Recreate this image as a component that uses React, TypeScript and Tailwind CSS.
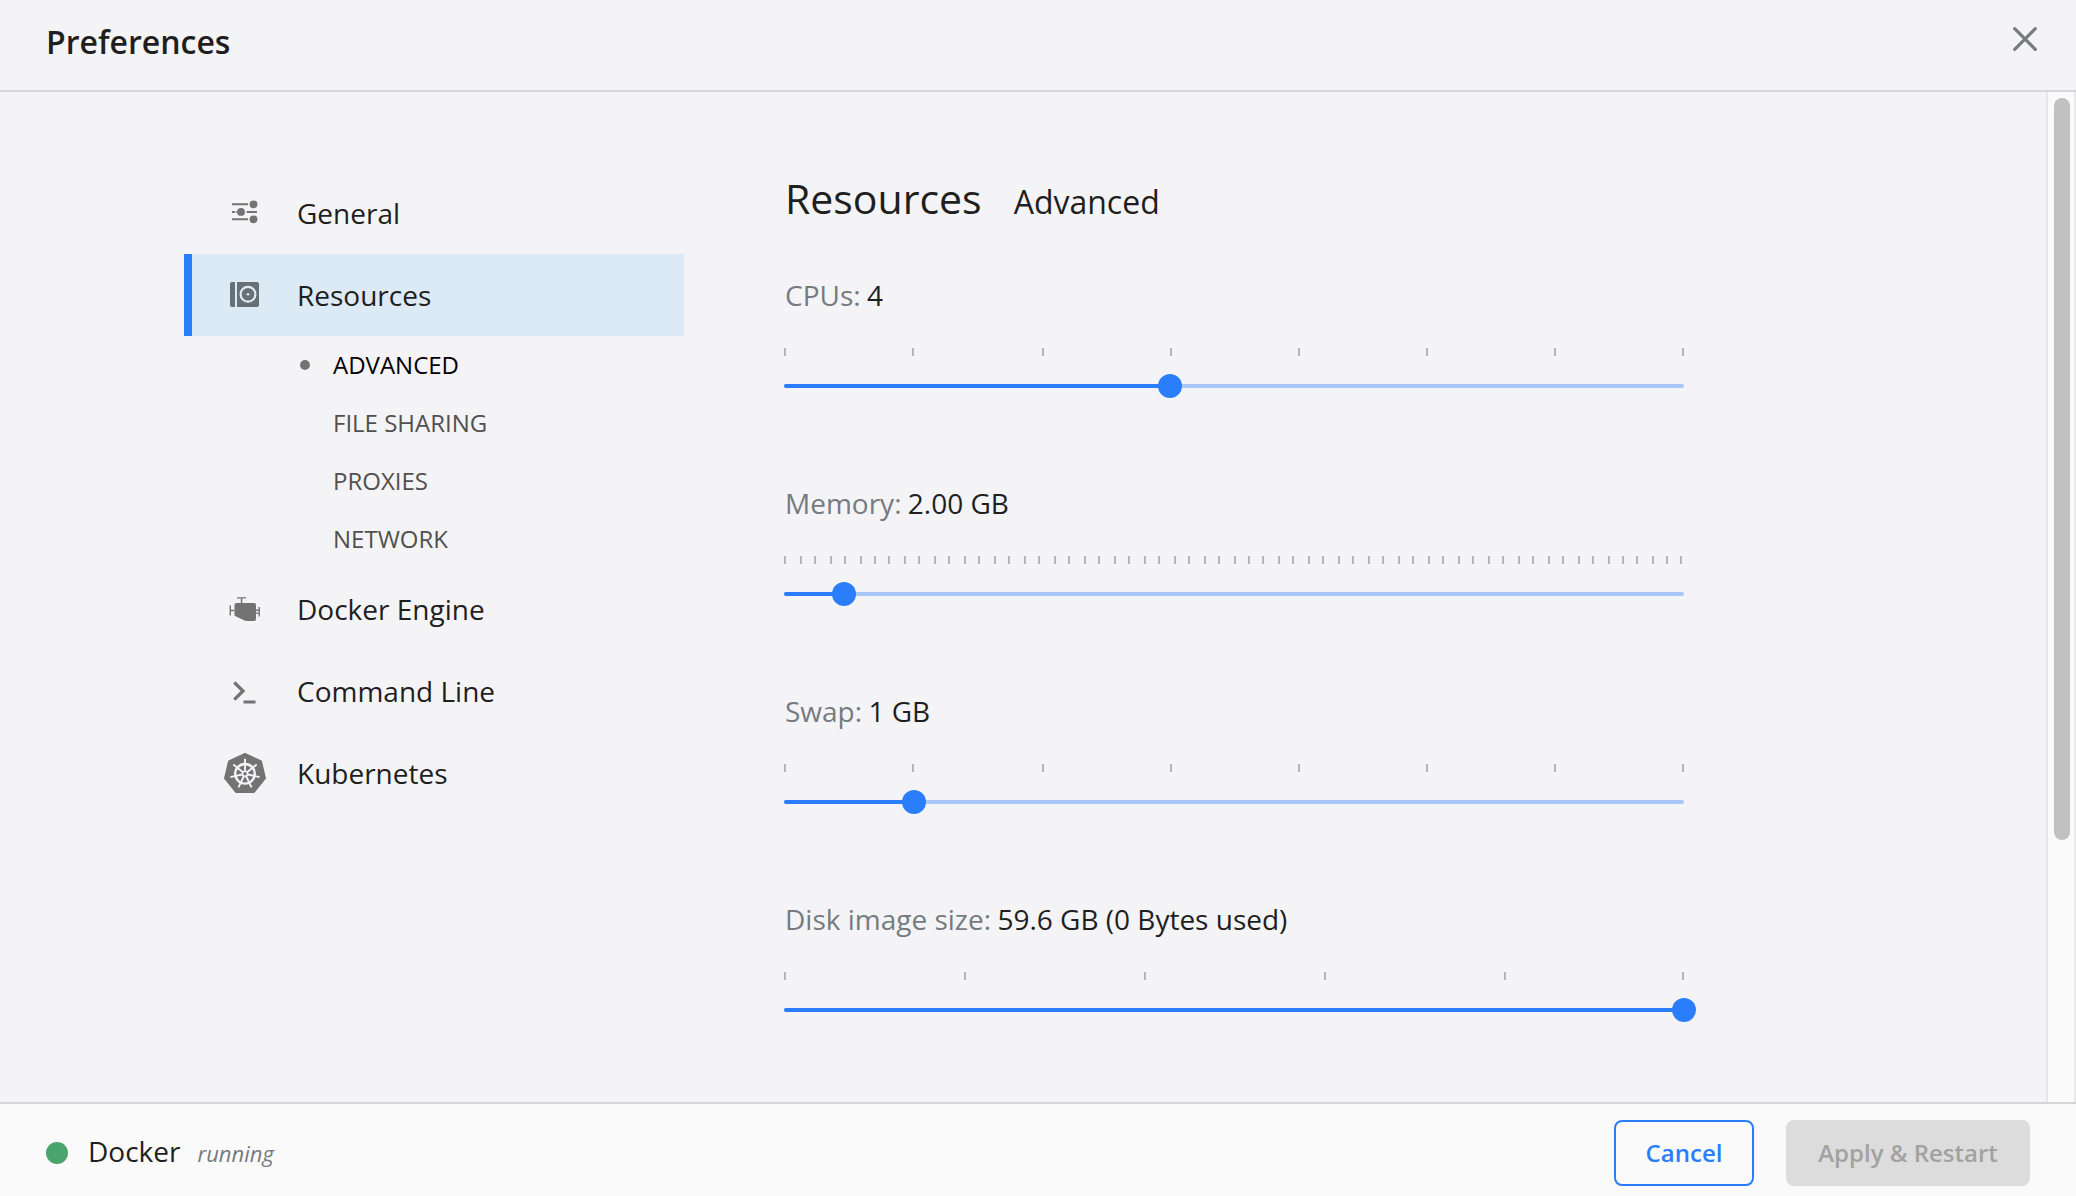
import React from "react";

const cpuTicks = [0, 128, 258, 386, 514, 642, 770, 898];
const diskTicks = [0, 180, 360, 540, 720, 898];
const memoryTicks = Array.from({ length: 61 }, (_, i) =>
  i === 60 ? 896 : Math.round((i * 14.96 + 0.2) / 2) * 2,
);

function Slider({ label, value, ticks, position }: { label: string; value: string; ticks: number[]; position: number }) {
  return (
    <section className="h-52 w-[900px]">
      <div className="h-[38px] text-[28px] leading-[38px] whitespace-nowrap text-[#1f1f1f]">
        <span className="-mr-px pl-px text-[#757b80]">{label}:</span> {value}
      </div>
      <div className="mt-[34px] flex h-2">
        {ticks.map((t, i) => (
          <span
            key={t}
            className="h-2 w-0.5 shrink-0 bg-[#b5b5b7]"
            style={{ marginLeft: i === 0 ? 0 : t - ticks[i - 1] - 2 }}
          />
        ))}
      </div>
      <div className="relative mt-7 h-1 rounded-full bg-[#a8c7f7]">
        <div className="h-1 rounded-full bg-[#2a7efc]" style={{ width: position }} />
        <div className="absolute -top-2.5 size-6 -translate-x-1/2 rounded-full bg-[#2a7efc]" style={{ left: position }} />
      </div>
    </section>
  );
}

function GeneralIcon() {
  return (
    <svg className="mb-0.5 h-6 w-7" viewBox="0 0 28 24" fill="#737373">
      <path d="M1 3.2h16v2H1zM1 10.9h2.8v2H1zM4.8 10.9h1v2h-1zM15.6 10.9H26v2H15.6zM1 18.3h16v2H1z" />
      <circle cx="22.5" cy="4.3" r="3.9" />
      <circle cx="10" cy="11.9" r="3.9" />
      <circle cx="22.5" cy="19.3" r="3.9" />
    </svg>
  );
}

function ResourcesIcon() {
  return (
    <svg className="mb-px h-[25px] w-[29px]" viewBox="0 0 29 25" fill="#667076">
      <path d="M2 0h3v25H2a2 2 0 0 1-2-2V2a2 2 0 0 1 2-2zM7 0h20a2 2 0 0 1 2 2v21a2 2 0 0 1-2 2H7z" />
      <circle cx="18" cy="12.3" r="7.4" stroke="#dceaf5" strokeWidth="2.2" />
      <circle cx="18" cy="12.3" r="1.3" fill="#dceaf5" />
    </svg>
  );
}

function EngineIcon() {
  return (
    <svg className="h-6 w-8" viewBox="0 0 32 24" fill="#737373">
      <path d="M8 6h17a2 2 0 0 1 2 2v14a2 2 0 0 1-2 2h-7q-1.5 0-3-.8L5.500 18.800V8a2 2 0 0 1 2-2z" />
      <path d="M8 .2h9v1.400h-3.700V6h-1.500V1.600H8zM.6 8.500H2v4.200h3.500v1.500H2v4.200H.6zM27 12.500h2.500V10h1.400v9.500h-1.400v-2.800H27v-1.300h2.500v-1.500H27z" />
    </svg>
  );
}

function CommandIcon() {
  return (
    <svg className="mr-px h-[26px] w-6" viewBox="0 0 24 26" fill="none" stroke="#737373">
      <path d="M2.300 4.300l8.700 8.700-8.700 8.700" strokeWidth="3.300" />
      <path d="M11.500 24h12" strokeWidth="3" />
    </svg>
  );
}

const spokes = Array.from({ length: 7 }, (_, i) => (i * 360) / 7);

function KubernetesIcon() {
  return (
    <svg className="h-10 w-[42px]" viewBox="0 0 42 40" fill="none">
      <path
        d="M21 1l16 7.500 4 16.700L30 39H12L1 25.200 5 8.500z"
        fill="#737373"
        stroke="#737373"
        strokeWidth="2"
        strokeLinejoin="round"
      />
      <g transform="translate(21 20.800)" stroke="#f4f4f6">
        <circle r="9.800" strokeWidth="2.400" />
        {spokes.map((a) => (
          <path key={a} d="M0-3V-15" strokeWidth="1.900" transform={`rotate(${a})`} />
        ))}
        <circle r="2.600" strokeWidth="1.600" />
      </g>
    </svg>
  );
}

function NavItem({ icon, label, active = false }: { icon: React.ReactNode; label: string; active?: boolean }) {
  return (
    <div
      className={
        active
          ? "flex h-[82px] items-center border-l-8 border-[#2a7efc] bg-[#dceaf5]"
          : "flex h-[82px] items-center border-l-8 border-transparent"
      }
    >
      <div className="flex w-[105px] shrink-0 items-center justify-center">{icon}</div>
      <span className="text-[28px] leading-[38px] text-[#1f1f1f]">{label}</span>
    </div>
  );
}

function SubItem({ label, active = false }: { label: string; active?: boolean }) {
  return (
    <div className="flex h-[58px] items-center pl-[116px]">
      <span className={active ? "size-2.5 rounded-full bg-[#737373]" : "size-2.5"} />
      <span className={active ? "ml-[23px] text-2xl text-black" : "ml-[23px] text-2xl text-[#505050]"}>{label}</span>
    </div>
  );
}

export default function App() {
  return (
    <div className="flex h-[1196px] w-[2076px] flex-col overflow-hidden bg-[#f4f4f6] font-['Open_Sans',sans-serif] text-[#1f1f1f]">
      <header className="flex h-[92px] shrink-0 items-start justify-between border-b-2 border-[#d5d6d8] pr-[38px] pl-[46px]">
        <h1 className="mt-5 text-[32px] leading-[44px] font-semibold">Preferences</h1>
        <svg className="mt-[26px] size-[26px]" viewBox="0 0 26 26" stroke="#757b80" strokeWidth="3.200" strokeLinecap="round">
          <path d="M2.700 2.700l20.600 20.600M23.300 2.700l-20.600 20.600" />
        </svg>
      </header>
      <div className="flex min-h-0 flex-1">
        <main className="flex flex-1 pl-[184px]">
          <nav className="w-[500px] shrink-0 pt-20">
            <NavItem icon={<GeneralIcon />} label="General" />
            <NavItem icon={<ResourcesIcon />} label="Resources" active />
            <SubItem label="ADVANCED" active />
            <SubItem label="FILE SHARING" />
            <SubItem label="PROXIES" />
            <SubItem label="NETWORK" />
            <NavItem icon={<EngineIcon />} label="Docker Engine" />
            <NavItem icon={<CommandIcon />} label="Command Line" />
            <NavItem icon={<KubernetesIcon />} label="Kubernetes" />
          </nav>
          <div className="ml-[100px] pt-20">
            <div className="flex h-[104px] items-baseline pl-px">
              <h2 className="text-[41px] leading-[52px]">Resources</h2>
              <span className="ml-8 text-[32px] leading-10">Advanced</span>
            </div>
            <Slider label="CPUs" value="4" ticks={cpuTicks} position={386} />
            <Slider label="Memory" value="2.00 GB" ticks={memoryTicks} position={60} />
            <Slider label="Swap" value="1 GB" ticks={cpuTicks} position={130} />
            <Slider label="Disk image size" value="59.6 GB (0 Bytes used)" ticks={diskTicks} position={900} />
          </div>
        </main>
        <div className="w-[30px] shrink-0 border-x-2 border-[#e8e8e8] bg-[#fafafa] pt-1.5 pl-1.5">
          <div className="h-[742px] w-4 rounded-full bg-[#c1c1c1]" />
        </div>
      </div>
      <footer className="flex h-[94px] shrink-0 items-start border-t-2 border-[#d5d6d8] bg-[#fafafa] pr-[46px] pl-[46px]">
        <span className="mt-[38px] size-[22px] rounded-full bg-[#4aa56c]" />
        <div className="mt-7 ml-5 flex items-baseline">
          <span className="text-[28px] leading-[38px]">Docker</span>
          <span className="ml-[17px] text-[22px] text-[#757b80] italic">running</span>
        </div>
        <button className="mt-4 ml-auto h-[66px] w-[140px] rounded-lg border-2 border-[#2a7efc] text-2xl font-semibold text-[#2a7efc]">
          Cancel
        </button>
        <button className="mt-4 ml-8 h-[66px] w-[244px] rounded-lg bg-[#dcdcdc] text-2xl font-semibold text-[#a2a2a2]">
          Apply &amp; Restart
        </button>
      </footer>
    </div>
  );
}
